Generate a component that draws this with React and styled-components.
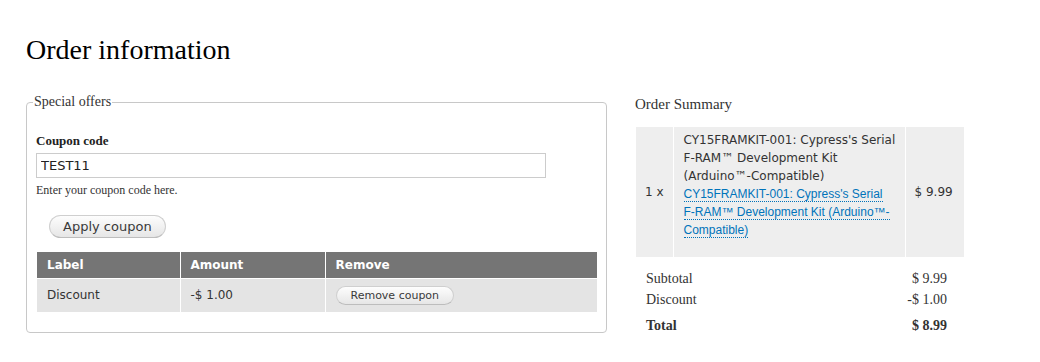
import React from 'react';
import styled, { createGlobalStyle } from 'styled-components';

const GlobalStyle = createGlobalStyle`
  body {
    margin: 0;
    background: #fff;
    color: #222;
    font-family: 'Liberation Serif', 'Times New Roman', serif;
  }
`;

const Page = styled.div`
  padding: 33px 0 0 26px;
`;

const Title = styled.h1`
  margin: 0;
  font-size: 28px;
  line-height: 34px;
  font-weight: normal;
  color: #000;
`;

const Columns = styled.div`
  display: flex;
  align-items: flex-start;
  gap: 29px;
  margin-top: 27px;
`;

const Fieldset = styled.fieldset`
  width: 580px;
  box-sizing: border-box;
  margin: 0;
  padding: 0 9px 20px 10px;
  border: 1px solid #c8c8c8;
  border-radius: 4px;
`;

const Legend = styled.legend`
  padding: 0 1px;
  margin-left: -4px;
  font-size: 14px;
  line-height: 16px;
  color: #333;
`;

const FormItem = styled.div`
  margin-top: 23px;
  margin-left: -1px;
`;

const Label = styled.label`
  display: block;
  font-size: 13px;
  line-height: 16px;
  font-weight: bold;
  margin-bottom: 4px;
`;

const Input = styled.input`
  display: block;
  box-sizing: border-box;
  width: 510px;
  height: 25px;
  padding: 0 4px;
  border: 1px solid #ccc;
  font-family: 'DejaVu Sans', sans-serif;
  font-size: 13px;
  color: #222;
  outline: none;
`;

const Description = styled.div`
  margin-top: 5px;
  font-size: 12px;
  line-height: 14px;
  color: #333;
`;

const Button = styled.button`
  box-sizing: border-box;
  height: ${(p) => (p.small ? '19px' : '23px')};
  padding: 0 ${(p) => (p.small ? '14px' : '13px')};
  margin: ${(p) => (p.small ? '0' : '18px 0 0 12px')};
  border: 1px solid #cfcfcf;
  border-bottom-color: #bdbdbd;
  border-radius: 12px;
  background: linear-gradient(#fdfdfd, #e6e6e6);
  font-family: 'DejaVu Sans', sans-serif;
  font-size: ${(p) => (p.small ? '11px' : '13px')};
  color: #3a3a3a;
  cursor: pointer;
  display: inline-flex;
  align-items: center;
`;

const CouponTable = styled.table`
  width: 560px;
  margin-top: 14px;
  border-collapse: collapse;
  table-layout: fixed;
  font-family: 'DejaVu Sans', sans-serif;
  font-size: 12px;
`;

const Th = styled.th`
  width: ${(p) => p.w || 'auto'};
  height: 26px;
  padding: 0 10px;
  box-sizing: border-box;
  background: #757575;
  color: #fff;
  text-align: left;
  font-weight: bold;
  border-right: 1px solid #fff;
  border-bottom: 1px solid #fff;
  &:last-child { border-right: 0; }
`;

const Td = styled.td`
  height: 33px;
  padding: 0 10px;
  background: #e4e4e4;
  color: #333;
  border-right: 1px solid #fff;
  &:last-child { border-right: 0; }
`;

const Summary = styled.div`
  width: 328px;
`;

const SummaryTitle = styled.h3`
  margin: 1px 0 0 -1px;
  font-size: 15px;
  line-height: 18px;
  font-weight: normal;
  color: #333;
`;

const ItemTable = styled.table`
  width: 328px;
  margin-top: 14px;
  border-collapse: collapse;
  table-layout: fixed;
  font-family: 'DejaVu Sans', sans-serif;
  font-size: 12px;
  line-height: 18px;
  color: #333;
`;

const ItemCell = styled.td`
  width: ${(p) => p.w};
  height: 130px;
  box-sizing: border-box;
  padding: ${(p) => p.pad || '0 8px 0 9px'};
  background: #eeeeee;
  vertical-align: middle;
  white-space: ${(p) => (p.pad ? 'normal' : 'nowrap')};
  border-right: 1px solid #fff;
  &:last-child { border-right: 0; }
`;

const ProductLink = styled.a`
  color: #0073ba;
  text-decoration: none;
  border-bottom: 1px dotted #0073ba;
  font-family: 'Liberation Sans', Arial, sans-serif;
`;

const Totals = styled.table`
  width: 327px;
  margin-top: 11px;
  border-collapse: collapse;
  font-size: 14px;
  line-height: 21px;
  color: #333;
`;

const TotalCell = styled.td`
  padding: ${(p) => (p.strong ? '5px' : '0')} ${(p) => (p.right ? '16px' : '0')} 0
    ${(p) => (p.right ? '0' : '10px')};
  text-align: ${(p) => (p.right ? 'right' : 'left')};
  font-weight: ${(p) => (p.strong ? 'bold' : 'normal')};
`;

export default function App() {
  return (
    <Page>
      <GlobalStyle />
      <Title>Order information</Title>
      <Columns>
        <Fieldset>
          <Legend>Special offers</Legend>
          <FormItem>
            <Label htmlFor="coupon">Coupon code</Label>
            <Input id="coupon" defaultValue="TEST11" />
            <Description>Enter your coupon code here.</Description>
          </FormItem>
          <Button>Apply coupon</Button>
          <CouponTable>
            <thead>
              <tr>
                <Th w="143px">Label</Th>
                <Th w="145px">Amount</Th>
                <Th>Remove</Th>
              </tr>
            </thead>
            <tbody>
              <tr>
                <Td>Discount</Td>
                <Td>-$ 1.00</Td>
                <Td>
                  <Button small>Remove coupon</Button>
                </Td>
              </tr>
            </tbody>
          </CouponTable>
        </Fieldset>
        <Summary>
          <SummaryTitle>Order Summary</SummaryTitle>
          <ItemTable>
            <tbody>
              <tr>
                <ItemCell w="37px">1 x</ItemCell>
                <ItemCell w="232px" pad="4px 8px 18px 10px">
                  <div>CY15FRAMKIT-001: Cypress's Serial F-RAM™ Development Kit (Arduino™-Compatible)</div>
                  <ProductLink href="#">
                    CY15FRAMKIT-001: Cypress's Serial F-RAM™ Development Kit (Arduino™-Compatible)
                  </ProductLink>
                </ItemCell>
                <ItemCell w="59px">$ 9.99</ItemCell>
              </tr>
            </tbody>
          </ItemTable>
          <Totals>
            <tbody>
              <tr>
                <TotalCell>Subtotal</TotalCell>
                <TotalCell right>$ 9.99</TotalCell>
              </tr>
              <tr>
                <TotalCell>Discount</TotalCell>
                <TotalCell right>-$ 1.00</TotalCell>
              </tr>
              <tr>
                <TotalCell strong>Total</TotalCell>
                <TotalCell strong right>$ 8.99</TotalCell>
              </tr>
            </tbody>
          </Totals>
        </Summary>
      </Columns>
    </Page>
  );
}
